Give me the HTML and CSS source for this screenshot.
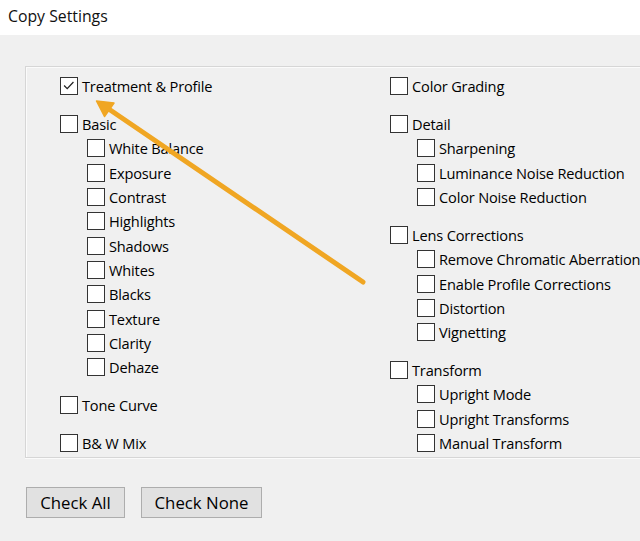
FILE: index.html
```html
<!DOCTYPE html>
<html>
<head>
<meta charset="utf-8">
<link rel="stylesheet" href="styles.css">
</head>
<body>
<div class="titlebar">Copy Settings</div>
<div class="content">
  <div class="group">
    <div class="col col-left">
      <div class="sec">
        <div class="row"><span class="box checked"><svg viewBox="0 0 18 18" width="16" height="16"><path d="M3.5 8.5 L7 12 L14 4.5" fill="none" stroke="#222" stroke-width="1.4"/></svg></span>Treatment &amp; Profile</div>
      </div>
      <div class="sec">
        <div class="row"><span class="box"></span>Basic</div>
        <div class="sub">
          <div class="row"><span class="box"></span>White Balance</div>
          <div class="row"><span class="box"></span>Exposure</div>
          <div class="row"><span class="box"></span>Contrast</div>
          <div class="row"><span class="box"></span>Highlights</div>
          <div class="row"><span class="box"></span>Shadows</div>
          <div class="row"><span class="box"></span>Whites</div>
          <div class="row"><span class="box"></span>Blacks</div>
          <div class="row"><span class="box"></span>Texture</div>
          <div class="row"><span class="box"></span>Clarity</div>
          <div class="row"><span class="box"></span>Dehaze</div>
        </div>
      </div>
      <div class="sec">
        <div class="row"><span class="box"></span>Tone Curve</div>
      </div>
      <div class="sec">
        <div class="row"><span class="box"></span>B&amp; W Mix</div>
      </div>
    </div>
    <div class="col col-right">
      <div class="sec">
        <div class="row"><span class="box"></span>Color Grading</div>
      </div>
      <div class="sec">
        <div class="row"><span class="box"></span>Detail</div>
        <div class="sub">
          <div class="row"><span class="box"></span>Sharpening</div>
          <div class="row"><span class="box"></span>Luminance Noise Reduction</div>
          <div class="row"><span class="box"></span>Color Noise Reduction</div>
        </div>
      </div>
      <div class="sec">
        <div class="row"><span class="box"></span>Lens Corrections</div>
        <div class="sub">
          <div class="row"><span class="box"></span>Remove Chromatic Aberration</div>
          <div class="row"><span class="box"></span>Enable Profile Corrections</div>
          <div class="row"><span class="box"></span>Distortion</div>
          <div class="row"><span class="box"></span>Vignetting</div>
        </div>
      </div>
      <div class="sec">
        <div class="row"><span class="box"></span>Transform</div>
        <div class="sub">
          <div class="row"><span class="box"></span>Upright Mode</div>
          <div class="row"><span class="box"></span>Upright Transforms</div>
          <div class="row"><span class="box"></span>Manual Transform</div>
        </div>
      </div>
    </div>
  </div>
  <div class="buttons">
    <button class="btn btn-all">Check All</button>
    <button class="btn btn-none">Check None</button>
  </div>
</div>
<svg class="arrow" width="640" height="541" viewBox="0 0 640 541">
  <line x1="363" y1="282" x2="108" y2="108.5" stroke="#f0a623" stroke-width="5" stroke-linecap="round"/>
  <polygon points="96.5,101 104.5,116.5 114,103" fill="#f0a623" stroke="#f0a623" stroke-width="1.5" stroke-linejoin="round"/>
</svg>
</body>
</html>
```
FILE: styles.css
```css
html, body {
  margin: 0;
  padding: 0;
}
body {
  width: 640px;
  height: 541px;
  overflow: hidden;
  background: #f0f0f0;
  font-family: "Open Sans", "Noto Sans", sans-serif;
  color: #000;
  position: relative;
}
.titlebar {
  height: 35px;
  line-height: 33px;
  background: #ffffff;
  padding-left: 8px;
  font-size: 15.8px;
  color: #111;
}
.content {
  padding-top: 31px;
}
.group {
  margin-left: 25px;
  width: 700px;
  border: 1px solid #d6d6d6;
  border-right: none;
  box-shadow: inset 1px 1px 0 #fbfbfb, 0 1px 0 #fbfbfb;
  padding: 7px 0 2px 34px;
  display: flex;
  box-sizing: border-box;
}
.col-left {
  width: 330px;
}
.sec + .sec {
  margin-top: 13.7px;
}
.row {
  height: 24.3px;
  display: flex;
  align-items: center;
  font-size: 14.6px;
  letter-spacing: -0.17px;
  white-space: nowrap;
}
.sub {
  padding-left: 27px;
}
.box {
  width: 18px;
  height: 18px;
  box-sizing: border-box;
  border: 1px solid #333;
  background: #fff;
  margin-right: 4px;
  flex: none;
  display: flex;
  align-items: center;
  justify-content: center;
}
.buttons {
  margin-top: 29px;
  padding-left: 26px;
  display: flex;
  gap: 16px;
}
.btn {
  height: 31px;
  border: 1px solid #adadad;
  background: #e1e1e1;
  font-family: "Open Sans", "Noto Sans", sans-serif;
  font-size: 16.8px;
  color: #000;
  padding: 0;
}
.btn-all {
  width: 99px;
}
.btn-none {
  width: 121px;
}
.arrow {
  position: absolute;
  left: 0;
  top: 0;
  pointer-events: none;
}
```
